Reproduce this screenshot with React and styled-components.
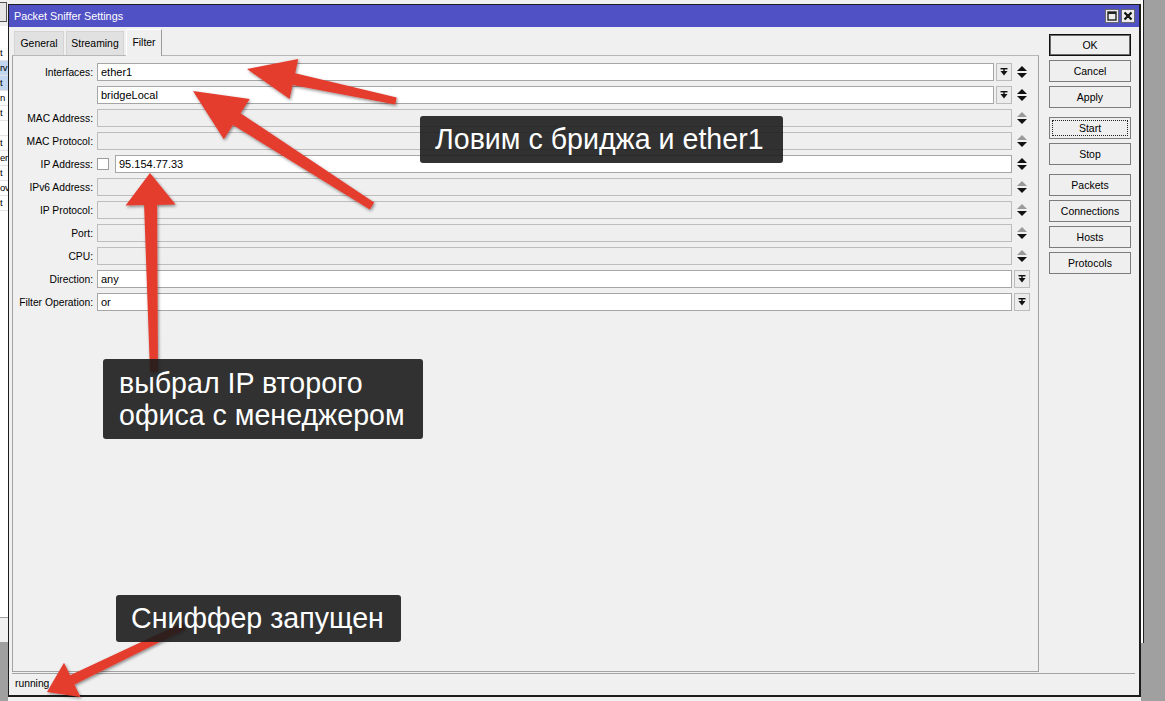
import React from 'react';
import styled, { createGlobalStyle } from 'styled-components';

const GlobalStyle = createGlobalStyle`
  html, body {
    margin: 0;
    padding: 0;
  }
  body {
    font-family: "Liberation Sans", Arial, sans-serif;
    background: #f0f0f0;
  }
`;

const rows = [
  { label: 'Interfaces:', value: 'ether1', dropdown: true, spin: 'on' },
  { label: '', value: 'bridgeLocal', dropdown: true, spin: 'on' },
  { label: 'MAC Address:', disabled: true, spin: 'off' },
  { label: 'MAC Protocol:', disabled: true, spin: 'off' },
  { label: 'IP Address:', value: '95.154.77.33', checkbox: true, spin: 'on' },
  { label: 'IPv6 Address:', disabled: true, spin: 'off' },
  { label: 'IP Protocol:', disabled: true, spin: 'off' },
  { label: 'Port:', disabled: true, spin: 'off' },
  { label: 'CPU:', disabled: true, spin: 'off' },
  { label: 'Direction:', value: 'any', select: true },
  { label: 'Filter Operation:', value: 'or', select: true },
];

const buttonGroups = [
  [{ text: 'OK', kind: 'default' }, { text: 'Cancel' }, { text: 'Apply' }],
  [{ text: 'Start', kind: 'focus' }, { text: 'Stop' }],
  [{ text: 'Packets' }, { text: 'Connections' }, { text: 'Hosts' }, { text: 'Protocols' }],
];

// only the tail ends of the list behind the dialog are visible
const listItems = [
  { text: 't' }, { text: 'rv', selected: true }, { text: 't', selected: true },
  { text: 'n' }, { text: 't' }, { text: '' }, { text: 't' }, { text: 'er' },
  { text: 't' }, { text: 'ov' }, { text: 't' },
];

// geometry for the red annotation arrows
const arrows = [
  { tail: [396, 101], tip: [247, 69], tailW: 7, neckW: 12, headL: 48, headW: 41 },
  { tail: [372, 206], tip: [193, 91], tailW: 8, neckW: 14, headL: 52, headW: 48 },
  { tail: [154, 372], tip: [150, 173], tailW: 8, neckW: 13, headL: 32, headW: 50 },
  { tail: [184, 626], tip: [47, 692], tailW: 7, neckW: 10, headL: 28, headW: 38 },
];

function arrowPoints({ tail, tip, tailW, neckW, headL, headW }) {
  const [tx, ty] = tail;
  const [hx, hy] = tip;
  const len = Math.hypot(hx - tx, hy - ty);
  const ux = (hx - tx) / len;
  const uy = (hy - ty) / len;
  const px = -uy;
  const py = ux;
  const nx = hx - ux * headL;
  const ny = hy - uy * headL;
  const pts = [
    [tx + (px * tailW) / 2, ty + (py * tailW) / 2],
    [nx + (px * neckW) / 2, ny + (py * neckW) / 2],
    [nx + (px * headW) / 2, ny + (py * headW) / 2],
    [hx, hy],
    [nx - (px * headW) / 2, ny - (py * headW) / 2],
    [nx - (px * neckW) / 2, ny - (py * neckW) / 2],
    [tx - (px * tailW) / 2, ty - (py * tailW) / 2],
  ];
  return pts.map((p) => p.map((v) => v.toFixed(1)).join(',')).join(' ');
}

const SpinIcon = ({ dim }) => (
  <svg width="10" height="14" viewBox="0 0 10 14">
    <polygon points="0,6 5,1 10,6" fill={dim ? '#9a9a9a' : '#111'} />
    <polygon points="0,8 10,8 5,13" fill="#111" />
  </svg>
);

const DropIcon = () => (
  <svg width="8" height="8" viewBox="0 0 8 8">
    <rect x="0.5" y="0" width="7" height="1.4" fill="#111" />
    <polygon points="0.5,3 7.5,3 4,7.5" fill="#111" />
    <rect x="3.3" y="1" width="1.4" height="3" fill="#111" />
  </svg>
);

export default function App() {
  return (
    <>
      <GlobalStyle />
      <Screen>
        <LeftStrip>
          <StripTool>
            <StripToolButton />
          </StripTool>
          <StripList>
            {listItems.map((item, i) => (
              <StripRow key={i} selected={item.selected}>
                {item.text}
              </StripRow>
            ))}
          </StripList>
          <StripStatus />
          <StripBackdrop />
        </LeftStrip>

        <Window>
          <TitleBar>
            <TitleText>Packet Sniffer Settings</TitleText>
            <TitleButtons>
              <TitleButton>
                <svg width="10" height="10" viewBox="0 0 10 10">
                  <rect x="1" y="1" width="8" height="8" fill="none" stroke="#222" strokeWidth="1.4" />
                  <rect x="1" y="1" width="8" height="2" fill="#222" />
                </svg>
              </TitleButton>
              <TitleButton>
                <svg width="10" height="10" viewBox="0 0 10 10">
                  <path d="M1.5 1.5 L8.5 8.5 M8.5 1.5 L1.5 8.5" stroke="#111" strokeWidth="2.2" />
                </svg>
              </TitleButton>
            </TitleButtons>
          </TitleBar>

          <Body>
            <TabSection>
              <TabStrip>
                <Tab width={50}>General</Tab>
                <Tab width={58}>Streaming</Tab>
                <Tab width={36} active>Filter</Tab>
              </TabStrip>
              <Panel>
                <Form>
                  {rows.map((row, i) => (
                    <FormRow key={i}>
                      <Label>{row.label}</Label>
                      <FieldGroup>
                        {row.checkbox && <Check />}
                        <TextBox disabled={row.disabled}>{row.value}</TextBox>
                        {row.dropdown && (
                          <DropButton>
                            <DropIcon />
                          </DropButton>
                        )}
                        {row.select ? (
                          <DropButton>
                            <DropIcon />
                          </DropButton>
                        ) : (
                          <SpinSlot>
                            <SpinIcon dim={row.spin === 'off'} />
                          </SpinSlot>
                        )}
                      </FieldGroup>
                    </FormRow>
                  ))}
                </Form>
              </Panel>
            </TabSection>

            <ButtonColumn>
              {buttonGroups.map((group, gi) => (
                <ButtonGroup key={gi}>
                  {group.map((b) => (
                    <DialogButton key={b.text} kind={b.kind}>
                      {b.text}
                    </DialogButton>
                  ))}
                </ButtonGroup>
              ))}
            </ButtonColumn>
          </Body>

          <StatusBar>running</StatusBar>
        </Window>

        <RightBackdrop>
          <PeekWindow />
        </RightBackdrop>

        <ArrowLayer width="1165" height="701" viewBox="0 0 1165 701">
          <defs>
            <filter id="arrowShadow" x="-20%" y="-20%" width="140%" height="140%">
              <feDropShadow dx="1" dy="1.5" stdDeviation="1.6" floodColor="#000" floodOpacity="0.45" />
            </filter>
          </defs>
          {arrows.map((a, i) => (
            <polygon key={i} points={arrowPoints(a)} fill="#e43c2f" filter="url(#arrowShadow)" />
          ))}
        </ArrowLayer>

        <Callout x={420} y={116} w={363} h={47}>
          Ловим с бриджа и ether1
        </Callout>
        <Callout x={103} y={359} w={320} h={80}>
          выбрал IP второго
          <br />
          офиса с менеджером
        </Callout>
        <Callout x={116} y={595} w={285} h={47}>
          Сниффер запущен
        </Callout>
      </Screen>
    </>
  );
}

const Screen = styled.div`
  position: relative;
  width: 1165px;
  height: 701px;
  display: flex;
  overflow: hidden;
  background: #f0f0f0;
`;

const LeftStrip = styled.div`
  width: 8px;
  flex-shrink: 0;
  display: flex;
  flex-direction: column;
  overflow: hidden;
`;

const StripTool = styled.div`
  height: 26px;
  padding-top: 2px;
  box-sizing: border-box;
  background: #f0f0f0;
`;

const StripToolButton = styled.div`
  width: 7px;
  height: 20px;
  box-sizing: border-box;
  border: 1px solid #555;
  border-left: none;
  background: #e6e6e6;
`;

const StripList = styled.div`
  height: 592px;
  box-sizing: border-box;
  padding-top: 20px;
  background: #fff;
  border-bottom: 1px solid #a0a0a0;
`;

const StripRow = styled.div`
  height: 15px;
  box-sizing: border-box;
  font-size: 9.5px;
  line-height: 14px;
  letter-spacing: -0.3px;
  color: #000;
  white-space: nowrap;
  background: ${(p) => (p.selected ? '#c2d6f0' : 'transparent')};
  border-bottom: 1px solid #e4e4e4;
`;

const StripStatus = styled.div`
  height: 24px;
  background: #f0f0f0;
`;

const StripBackdrop = styled.div`
  flex: 1;
  background: #a0a0a0;
`;

const Window = styled.div`
  width: 1133px;
  height: 693px;
  margin-top: 4px;
  flex-shrink: 0;
  box-sizing: border-box;
  border: 1px solid #1c1c1c;
  border-right-width: 2px;
  border-bottom-width: 2px;
  background: #f0f0f0;
  display: flex;
  flex-direction: column;
`;

const TitleBar = styled.div`
  height: 22px;
  flex-shrink: 0;
  background: #5151c6;
  display: flex;
  align-items: center;
  justify-content: space-between;
  padding: 0 4px 0 5px;
`;

const TitleText = styled.span`
  color: #fff;
  font-size: 10.8px;
`;

const TitleButtons = styled.div`
  display: flex;
  gap: 2px;
`;

const TitleButton = styled.div`
  width: 14px;
  height: 14px;
  box-sizing: border-box;
  border: 1px solid #6a6a6a;
  background: #ececec;
  display: flex;
  align-items: center;
  justify-content: center;
`;

const Body = styled.div`
  flex: 1;
  display: flex;
  padding: 2px 8px 0 3px;
  min-height: 0;
`;

const TabSection = styled.div`
  width: 1027px;
  display: flex;
  flex-direction: column;
  padding-bottom: 1px;
`;

const TabStrip = styled.div`
  height: 26px;
  display: flex;
  align-items: flex-end;
  gap: 2px;
  padding-left: 2px;
  flex-shrink: 0;
`;

const Tab = styled.div`
  position: relative;
  width: ${(p) => p.width}px;
  height: ${(p) => (p.active ? 27 : 24)}px;
  margin-bottom: ${(p) => (p.active ? -1 : 0)}px;
  box-sizing: border-box;
  background: ${(p) => (p.active ? '#f0f0f0' : '#e1e1e1')};
  border: 1px solid ${(p) => (p.active ? '#fff' : '#d4d4d4')};
  border-right-color: ${(p) => (p.active ? '#9c9c9c' : '#d4d4d4')};
  border-bottom: none;
  font-size: 10.4px;
  line-height: ${(p) => (p.active ? 26 : 23)}px;
  text-align: center;
  color: #000;
  z-index: ${(p) => (p.active ? 1 : 0)};
`;

const Panel = styled.div`
  flex: 1;
  box-sizing: border-box;
  border: 1px solid #a3a3a3;
  border-top-color: #b8b8b8;
  padding: 7px 8px 0 0;
`;

const Form = styled.div`
  display: flex;
  flex-direction: column;
  gap: 5px;
`;

const FormRow = styled.div`
  height: 18px;
  display: flex;
  align-items: center;
`;

const Label = styled.div`
  width: 80px;
  margin-right: 4px;
  text-align: right;
  font-size: 10.3px;
  color: #000;
  white-space: nowrap;
`;

const FieldGroup = styled.div`
  flex: 1;
  display: flex;
  align-items: center;
  gap: 2px;
  height: 100%;
`;

const Check = styled.div`
  width: 12px;
  height: 12px;
  box-sizing: border-box;
  border: 1px solid #9c9c9c;
  background: #fff;
  margin-right: 4px;
`;

const TextBox = styled.div`
  flex: 1;
  height: 18px;
  box-sizing: border-box;
  border: 1px solid ${(p) => (p.disabled ? '#bdbdbd' : '#a6a6a6')};
  background: ${(p) => (p.disabled ? '#efefef' : '#fff')};
  padding: 0 3px;
  font-size: 11px;
  line-height: 16px;
  color: #000;
`;

const DropButton = styled.div`
  width: 16px;
  height: 18px;
  box-sizing: border-box;
  border: 1px solid #bcbcbc;
  background: #ececec;
  display: flex;
  align-items: center;
  justify-content: center;
`;

const SpinSlot = styled.div`
  width: 16px;
  height: 18px;
  display: flex;
  align-items: center;
  justify-content: center;
`;

const ButtonColumn = styled.div`
  margin-left: 10px;
  padding-top: 5px;
  display: flex;
  flex-direction: column;
  gap: 9px;
`;

const ButtonGroup = styled.div`
  display: flex;
  flex-direction: column;
  gap: 4px;
`;

const DialogButton = styled.div`
  position: relative;
  width: 82px;
  height: 22px;
  box-sizing: border-box;
  border: 1px solid ${(p) => (p.kind === 'default' ? '#111' : '#7c7c7c')};
  box-shadow: ${(p) => (p.kind === 'default' ? 'inset 0 0 0 1px #6a6a6a' : 'none')};
  background: #efefef;
  font-size: 10.5px;
  line-height: 20px;
  text-align: center;
  color: #000;

  &::after {
    content: '';
    display: ${(p) => (p.kind === 'focus' ? 'block' : 'none')};
    position: absolute;
    inset: 2px;
    border: 1px dotted #222;
  }
`;

const StatusBar = styled.div`
  height: 22px;
  flex-shrink: 0;
  margin: 0 4px 0 3px;
  box-sizing: border-box;
  border-top: 1px solid #a3a3a3;
  padding-left: 3px;
  font-size: 10.3px;
  line-height: 20px;
  color: #000;
`;

const RightBackdrop = styled.div`
  flex: 1;
  background: #a0a0a0;
`;

const PeekWindow = styled.div`
  width: 2px;
  height: 643px;
  background: #fff;
  border-right: 1px solid #222;
`;

const ArrowLayer = styled.svg`
  position: absolute;
  left: 0;
  top: 0;
  pointer-events: none;
`;

const Callout = styled.div`
  position: absolute;
  left: ${(p) => p.x}px;
  top: ${(p) => p.y}px;
  width: ${(p) => p.w}px;
  height: ${(p) => p.h}px;
  box-sizing: border-box;
  padding: ${(p) => (p.h > 60 ? '8px 0 0 16px' : '0 0 0 15px')};
  background: rgba(28, 28, 28, 0.9);
  border-radius: 3px;
  color: #fff;
  font-family: "Liberation Sans", Arial, sans-serif;
  font-size: 28.6px;
  line-height: ${(p) => (p.h > 60 ? '32px' : `${p.h - 1}px`)};
  white-space: nowrap;
`;
